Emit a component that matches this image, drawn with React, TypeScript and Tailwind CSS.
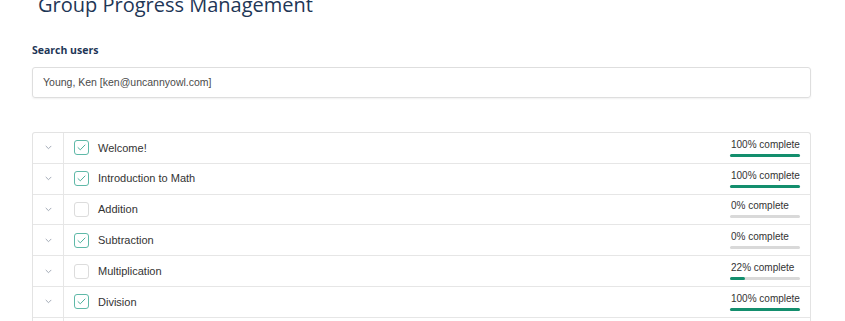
import * as React from 'react';

type Lesson = { title: string; done: boolean; pct: number | null };

const LESSONS: Lesson[] = [
  { title: 'Welcome!', done: true, pct: 100 },
  { title: 'Introduction to Math', done: true, pct: 100 },
  { title: 'Addition', done: false, pct: 0 },
  { title: 'Subtraction', done: true, pct: 0 },
  { title: 'Multiplication', done: false, pct: 22 },
  { title: 'Division', done: true, pct: 100 },
  // next row only peeks in at the bottom edge
  { title: '', done: false, pct: null },
];

function Chevron() {
  return (
    <svg width="7" height="5" viewBox="0 0 7 5" fill="none" className="text-gray-400">
      <path d="M1 1.2l2.5 2.5L6 1.2" stroke="currentColor" strokeWidth="0.9" strokeLinecap="round" />
    </svg>
  );
}

function Check({ on }: { on: boolean }) {
  return (
    <span
      className={`grid h-[15px] w-[15px] place-items-center rounded-[3px] border bg-white ${
        on ? 'border-[#5fb9a8]' : 'border-[#dcdcdc]'
      }`}
    >
      {on && (
        <svg width="9" height="7" viewBox="0 0 9 7" fill="none">
          <path d="M1 3.6l2.3 2.2L8 1" stroke="#4fb09c" strokeWidth="1" strokeLinecap="round" strokeLinejoin="round" />
        </svg>
      )}
    </span>
  );
}

export default function App() {
  return (
    <div className="h-[321px] overflow-hidden bg-white pl-8 pr-[34px] font-['Open_Sans',sans-serif]">
      <h1 className="-mt-[9px] pl-[6px] text-[20px] leading-[28px] font-normal text-[#1e3656]">
        Group Progress Management
      </h1>

      <label className="mt-[24px] block text-[10.5px] leading-[14px] font-bold text-[#1e3656]">Search users</label>
      <div className="mt-[10px] flex h-[31px] items-center rounded-[3px] border border-[#dedede] px-[10px] shadow-[0_1px_2px_rgba(0,0,0,0.06)]">
        <span className="font-['Liberation_Sans',sans-serif] text-[10.5px] text-[#4a4a4a]">Young, Ken [ken@uncannyowl.com]</span>
      </div>

      <div className="mt-[34px] rounded-t-[3px] border border-b-0 border-[#e3e3e3] font-['Liberation_Sans',sans-serif]">
        {LESSONS.map((l, i) => (
          <div key={i} className="flex h-[30.8px] border-b border-[#e6e6e6]">
            <div className="grid w-[31px] place-items-center border-r border-[#e6e6e6]">
              {l.pct !== null && <Chevron />}
            </div>
            {l.pct !== null && (
              <div className="flex flex-1 items-center pl-[10px] pr-[10px]">
                <Check on={l.done} />
                <span className="ml-[9px] text-[11px] text-[#333]">{l.title}</span>
                <div className="ml-auto flex w-[70px] flex-col items-start gap-[4px]">
                  <span className="pl-px text-[10px] leading-[11px] text-[#333]">{l.pct}% complete</span>
                  <div className="h-[3px] w-full rounded-full bg-[#d9d9d9]">
                    <div className="h-full rounded-full bg-[#138e6d]" style={{ width: `${l.pct}%` }} />
                  </div>
                </div>
              </div>
            )}
          </div>
        ))}
      </div>
    </div>
  );
}
